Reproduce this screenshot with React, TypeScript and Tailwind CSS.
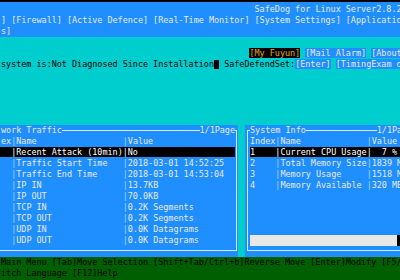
const TRAFFIC: [string, string][] = [
  ["Recent Attack (10min)", "No"],
  ["Traffic Start Time", "2018-03-01 14:52:25"],
  ["Traffic End Time", "2018-03-01 14:53:04"],
  ["IP IN", "13.7KB"],
  ["IP OUT", "70.0KB"],
  ["TCP IN", "0.2K Segments"],
  ["TCP OUT", "0.2K Segments"],
  ["UDP IN", "0.0K Datagrams"],
  ["UDP OUT", "0.0K Datagrams"],
];

const SYSINFO: [string, string, string][] = [
  ["1", "Current CPU Usage", "  7 %"],
  ["2", "Total Memory Size", "1839 MB"],
  ["3", "Memory Usage", "1518 MB"],
  ["4", "Memory Available", "320 MB"],
];

function Sep() {
  return <span className="text-[#a8d2ff]">|</span>;
}

export default function App() {
  return (
    <div className="h-[280px] w-[400px] overflow-hidden whitespace-pre bg-[#00cdcd] font-['DejaVu_Sans_Mono',monospace] text-[8.44px] leading-[11px]">
      <div className="h-[2px] bg-black" />

      {/* top menu */}
      <div className="h-[35px] bg-[#1f8fff] pl-[1px] pt-[1.5px] text-[#e8e8e8]">
        <div className="h-[11px]">{" ".repeat(50)}SafeDog for Linux Server2.8.2</div>
        <div className="h-[11px]">
          ] [Firewall] [Active Defence] [Real-Time Monitor] [System Settings] [Application Settings]
        </div>
        <div className="h-[11px]">s]</div>
      </div>

      {/* status lines */}
      <div className="h-[88px] pl-[1px] pt-[11px] text-black">
        <div className="h-[11px]">
          {" ".repeat(49)}
          <span className="bg-black text-[#e2a810]">[My Fuyun]</span>{" "}
          <span className="bg-[#1f8fff] text-[#e8e8e8]">[Mail Alarm]</span>{" "}
          <span className="bg-[#1f8fff] text-[#e8e8e8]">[About]</span>
        </div>
        <div className="h-[11px]">
          system is:Not Diagnosed Since Installation
          <span className="inline-block h-[9px] w-[5.08px] bg-black align-[-1.5px]" />
          {" "}SafeDefendSet:
          <span className="bg-[#1f8fff] text-[#e8e8e8]">[Enter]</span>{" "}
          <span className="bg-[#1f8fff] text-[#e8e8e8]">[TimingExam off]</span>
        </div>
      </div>

      {/* panels */}
      <div className="flex h-[132px] gap-[7px]">
        <div className="w-[238px] shrink-0 bg-[#1f8fff] pr-[1px] text-[#e8e8e8]">
          <div className="flex h-[11px]">
            <span className="pl-[1px]">work Traffic</span>
            <div className="mt-[5px] h-px flex-1 bg-[#d5e9ff]" />
            <span>1/1Page</span>
            <div className="mt-[5px] h-[6px] w-[2px] border-r border-t border-[#d5e9ff]" />
          </div>
          <div className="h-[115px] border-b border-r border-[#d5e9ff]">
            <div className="h-[11px] pl-[1px]">
              ex<Sep />Name{" ".repeat(17)}<Sep />Value
            </div>
            {TRAFFIC.map(([name, value], i) =>
              i === 0 ? (
                <div key={name} className="h-[11px]">
                  <div className="h-[10px] w-[235px] bg-black pl-[1px] text-white">
                    {"  "}|{name.padEnd(21)}|{value}
                  </div>
                </div>
              ) : (
                <div key={name} className="h-[11px] pl-[1px]">
                  {"  "}
                  <Sep />
                  {name.padEnd(21)}
                  <Sep />
                  {value}
                </div>
              )
            )}
          </div>
        </div>

        <div className="min-w-0 flex-1 overflow-hidden bg-[#1f8fff] text-[#e8e8e8]">
          <div className="flex h-[11px] pl-[2px]">
            <div className="mt-[5px] h-[6px] w-[3px] shrink-0 border-l border-t border-[#d5e9ff]" />
            <span className="shrink-0">System Info</span>
            <div className="mt-[5px] h-px w-[71px] shrink-0 bg-[#d5e9ff]" />
            <span className="shrink-0">1/1Page</span>
          </div>
          <div className="ml-[2px] h-[115px] border-b border-l border-[#d5e9ff] pl-[2px]">
            <div className="h-[11px]">
              Index<Sep />Name{" ".repeat(13)}<Sep />Value
            </div>
            {SYSINFO.map(([idx, name, value], i) =>
              i === 0 ? (
                <div key={idx} className="h-[11px]">
                  <div className="h-[10px] bg-black text-white">
                    {idx.padEnd(5)}|{name.padEnd(17)}|{value}
                  </div>
                </div>
              ) : (
                <div key={idx} className="h-[11px]">
                  {idx.padEnd(5)}
                  <Sep />
                  {name.padEnd(17)}
                  <Sep />
                  {value}
                </div>
              )
            )}
            <div className="h-[44px]" />
            <div className="flex h-[11px]">
              <div className="w-[147px] shrink-0 bg-[#e8e8e8]" />
              <div className="flex-1 bg-black" />
            </div>
          </div>
        </div>
      </div>

      {/* key help */}
      <div className="h-[23px] bg-[#005f00] pl-[1px] text-black">
        <div className="h-[11px]">
          Main Menu [Tab]Move Selection [Shift+Tab/Ctrl+b]Reverse Move [Enter]Modify [F5/F6]Page
        </div>
        <div className="h-[11px]">itch Language [F12]Help</div>
      </div>
    </div>
  );
}
